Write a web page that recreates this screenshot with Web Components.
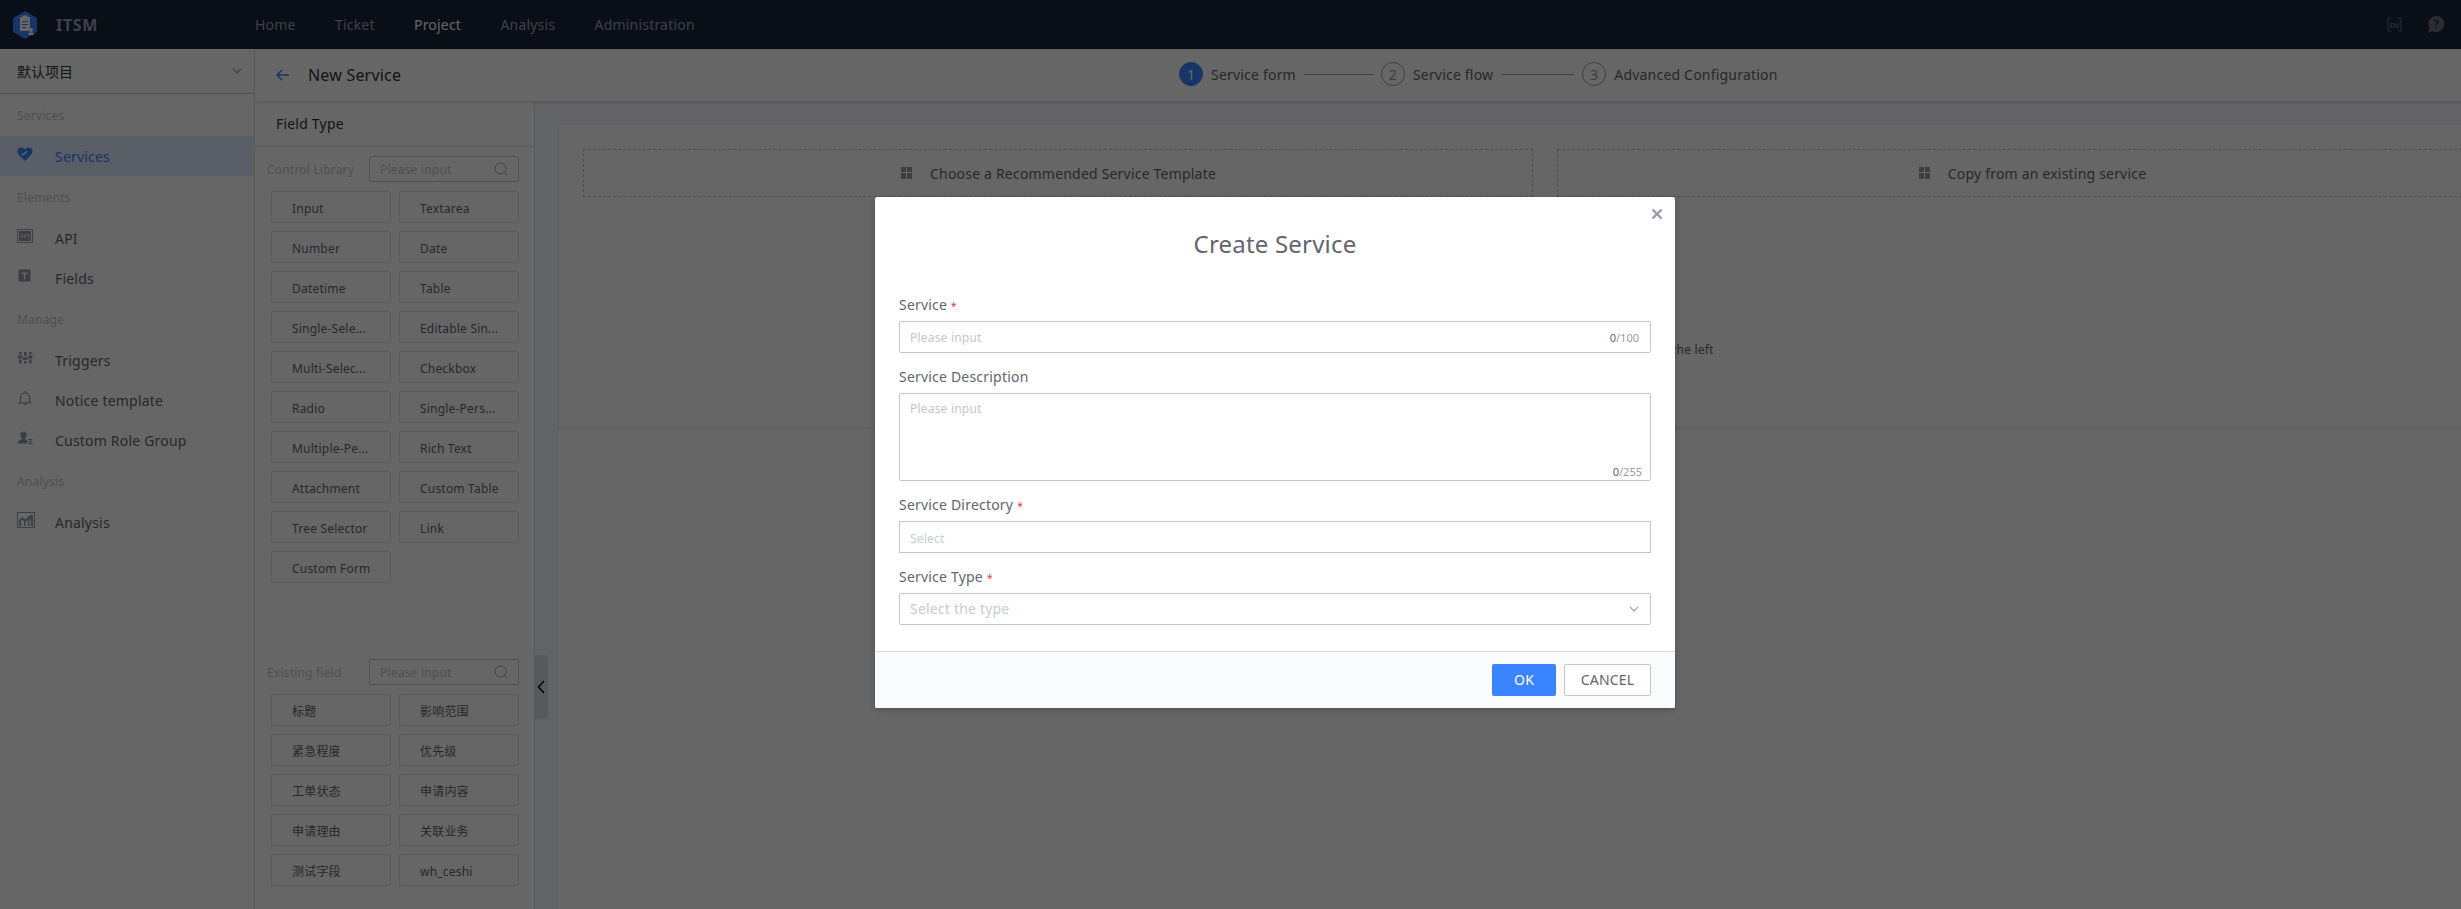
<!DOCTYPE html>
<html lang="en">
<head>
<meta charset="utf-8">
<title>ITSM</title>
<style>
    html, body { margin: 0; height: 100%; overflow: hidden; }
    body { font-family: "Noto Sans", "Noto Sans CJK SC", sans-serif; font-size: 14px; letter-spacing: .2px; color: #63656e; }
</style>
</head>
<body>
<itsm-app>
    <itsm-topbar slot="top"></itsm-topbar>
    <itsm-sidebar slot="side">
        <side-label>Services</side-label>
        <side-item icon="heart" active>Services</side-item>
        <side-label>Elements</side-label>
        <side-item icon="api">API</side-item>
        <side-item icon="field">Fields</side-item>
        <side-label>Manage</side-label>
        <side-item icon="sliders">Triggers</side-item>
        <side-item icon="bell">Notice template</side-item>
        <side-item icon="role">Custom Role Group</side-item>
        <side-label>Analysis</side-label>
        <side-item icon="chart">Analysis</side-item>
    </itsm-sidebar>
    <itsm-subheader slot="sub"></itsm-subheader>
    <field-panel slot="panel">
        <field-group label="Control Library" class="first">
            <field-btn>Input</field-btn><field-btn>Textarea</field-btn>
            <field-btn>Number</field-btn><field-btn>Date</field-btn>
            <field-btn>Datetime</field-btn><field-btn>Table</field-btn>
            <field-btn>Single-Sele...</field-btn><field-btn>Editable Sin...</field-btn>
            <field-btn>Multi-Selec...</field-btn><field-btn>Checkbox</field-btn>
            <field-btn>Radio</field-btn><field-btn>Single-Pers...</field-btn>
            <field-btn>Multiple-Pe...</field-btn><field-btn>Rich Text</field-btn>
            <field-btn>Attachment</field-btn><field-btn>Custom Table</field-btn>
            <field-btn>Tree Selector</field-btn><field-btn>Link</field-btn>
            <field-btn>Custom Form</field-btn>
        </field-group>
        <field-group label="Existing field" class="second">
            <field-btn>标题</field-btn><field-btn>影响范围</field-btn>
            <field-btn>紧急程度</field-btn><field-btn>优先级</field-btn>
            <field-btn>工单状态</field-btn><field-btn>申请内容</field-btn>
            <field-btn>申请理由</field-btn><field-btn>关联业务</field-btn>
            <field-btn>测试字段</field-btn><field-btn>wh_ceshi</field-btn>
        </field-group>
    </field-panel>
    <service-canvas slot="canvas"></service-canvas>
    <create-dialog slot="overlay"></create-dialog>
</itsm-app>

<script>
const icons = {
    heart: `<svg width="16" height="16" viewBox="0 0 16 16"><path fill="#3a84ff" d="M8 15 1.600 8.400C-.2 6.400.2 3.200 2.300 2c1.900-1 3.900-.5 5.700 1.200C9.800 1.500 11.800 1 13.700 2c2.100 1.200 2.500 4.400.7 6.400z"/><path fill="none" stroke="#fff" stroke-width="1.200" d="M4.500 7.500 6.300 9 10 5"/></svg>`,
    api: `<svg width="16" height="16" viewBox="0 0 16 16"><rect x=".5" y="1.500" width="15" height="13" fill="none" stroke="#979ba5"/><rect x="2" y="3" width="12" height="10" fill="#979ba5"/><text x="8" y="10.300" font-size="6" font-family="Noto Sans" text-anchor="middle" fill="#fff">API</text></svg>`,
    field: `<svg width="16" height="16" viewBox="0 0 16 16"><rect x="1.500" y="1.500" width="12" height="12" fill="#979ba5"/><path fill="#fff" d="M4.500 4.500h6v1.400H8.300V11H6.700V5.900H4.500z"/></svg>`,
    sliders: `<svg width="16" height="16" viewBox="0 0 16 16" fill="#979ba5"><rect x="2" y="2" width="2.500" height="2.500"/><rect x="7" y="2" width="2.500" height="4"/><rect x="12" y="2" width="2.500" height="2.500"/><rect x="1" y="5.500" width="4.500" height="3"/><rect x="6" y="7" width="4.500" height="3"/><rect x="11" y="5.500" width="4.500" height="3"/><rect x="2" y="9.500" width="2.500" height="4"/><rect x="7" y="11" width="2.500" height="2.500"/><rect x="12" y="9.500" width="2.500" height="4"/></svg>`,
    bell: `<svg width="16" height="16" viewBox="0 0 16 16" fill="none" stroke="#979ba5" stroke-width="1.200"><path d="M3.500 12V7.500c0-2.700 2-4.500 4.500-4.500s4.500 1.800 4.500 4.500V12l1 .8H2.500zM8 1v2M6.500 14.500h3"/></svg>`,
    role: `<svg width="16" height="16" viewBox="0 0 16 16" fill="#979ba5"><path d="M6.500 1.500c2 0 3.200 1.400 3.200 3.300 0 1.500-.7 2.700-1.500 3.300v1.100c.5.300 1.100.5 1.800.8v3.500H1v-1.800c0-1 1.800-1.800 3.800-2.500V8.100C4 7.500 3.300 6.300 3.300 4.800c0-1.900 1.200-3.300 3.200-3.300z"/><rect x="11" y="9" width="4.500" height="1.100"/><rect x="11" y="11" width="4.500" height="1.100"/><rect x="11" y="13" width="4.500" height="1.100"/></svg>`,
    chart: `<svg width="18" height="16" viewBox="0 0 18 16"><rect x=".5" y=".5" width="17" height="15" fill="none" stroke="#979ba5"/><path fill="#979ba5" d="M2 14V8l3.500-3 3 2.500L14 2.500l2 1V14h-2V6.500l-1.500 1V14h-1.500V8.500l-2.500 1V14H7V9L5.500 7.500 4 9v5z"/></svg>`,
    grid: `<svg width="13" height="16" viewBox="0 0 13 16" fill="#979ba5"><rect x="1" y="2" width="5" height="5"/><rect x="7" y="2" width="5" height="5"/><rect x="1" y="8" width="5" height="6"/><rect x="7" y="8" width="5" height="6"/></svg>`,
    search: `<svg width="14" height="14" viewBox="0 0 14 14" fill="none" stroke="#979ba5" stroke-width="1"><circle cx="6.500" cy="6.500" r="5.500"/><path d="m10.500 10.500 2.500 2.500"/></svg>`,
    chevron: `<svg width="10" height="6" viewBox="0 0 10 6" fill="none" stroke="#979ba5" stroke-width="1.200"><path d="m1 .8 4 4 4-4"/></svg>`,
}

class ItsmApp extends HTMLElement {
    constructor() {
        super()
        this.attachShadow({ mode: 'open' })
        this.shadowRoot.innerHTML = `
            <style>
                :host { display: flex; flex-direction: column; width: 2461px; height: 909px; overflow: hidden; position: relative; background: #fff; }
                .body { flex: 1; display: flex; min-height: 0; }
                .work { flex: 1; display: flex; flex-direction: column; min-width: 0; }
                .row { flex: 1; display: flex; min-height: 0; }
                .mask { position: absolute; inset: 0; z-index: 5; background: rgba(0, 0, 0, .6); }
            </style>
            <slot name="top"></slot>
            <div class="body">
                <slot name="side"></slot>
                <div class="work">
                    <slot name="sub"></slot>
                    <div class="row">
                        <slot name="panel"></slot>
                        <slot name="canvas"></slot>
                    </div>
                </div>
            </div>
            <div class="mask"></div>
            <slot name="overlay"></slot>
        `
    }
}

class ItsmTopbar extends HTMLElement {
    constructor() {
        super()
        this.attachShadow({ mode: 'open' })
        this.shadowRoot.innerHTML = `
            <style>
                :host { display: flex; align-items: center; height: 49px; flex: none; background: #19233a; color: #96a2b9; }
                .logo { display: flex; align-items: center; width: 255px; padding-left: 12px; box-sizing: border-box; }
                .logo b { font-size: 16px; font-weight: 700; letter-spacing: .7px; margin-left: 18px; }
                nav { display: flex; gap: 39.3px; font-size: 14px; }
                .on { color: #fff; }
                .tools { margin-left: auto; display: flex; align-items: center; gap: 26px; padding-right: 16px; }
            </style>
            <div class="logo">
                <svg width="26" height="28" viewBox="0 0 26 28">
                    <path fill="#3a84ff" d="M13 0 25 7v14l-12 7L1 21V7z"/>
                    <path fill="#fff" d="M8 6h2.500V4.500h5V6H18v14H8z"/>
                    <path fill="#3a84ff" d="M10 10h6v1h-6zM10 13h6v1h-6zM10 16h4v1h-4z"/>
                    <circle cx="19" cy="19" r="2" fill="#fff"/><path fill="#fff" d="M16 24c0-2 1.500-2.500 3-2.500s3 .5 3 2.500z"/>
                </svg>
                <b>ITSM</b>
            </div>
            <nav><span>Home</span><span>Ticket</span><span class="on">Project</span><span>Analysis</span><span>Administration</span></nav>
            <div class="tools">
                <svg width="15" height="15" viewBox="0 0 15 15" fill="none" stroke="#6b7280"><path d="M4 1H1v13h3M11 1h3v13h-3"/><text x="7.500" y="10.500" font-size="7" font-weight="700" font-family="Noto Sans" text-anchor="middle" fill="#6b7280" stroke="none">EN</text></svg>
                <svg width="17" height="17" viewBox="0 0 17 17"><path fill="#6b7280" d="M8.500 0a8 8 0 1 1-4 15L0 17l1.500-5A8 8 0 0 1 8.500 0z"/><text x="8.500" y="12" font-size="10" font-weight="700" font-family="Noto Sans" text-anchor="middle" fill="#19233a">?</text></svg>
            </div>
        `
    }
}

class ItsmSidebar extends HTMLElement {
    constructor() {
        super()
        this.attachShadow({ mode: 'open' })
        this.shadowRoot.innerHTML = `
            <style>
                :host { display: block; width: 255px; flex: none; box-sizing: border-box; border-right: 1px solid #dcdee5; background: #fff; }
                .project { display: flex; align-items: center; justify-content: space-between; box-sizing: border-box; height: 45px; padding: 0 12px 0 17px; border-bottom: 1px solid #c4c6cc; color: #313238; font-size: 14px; letter-spacing: 0; }
            </style>
            <div class="project"><span>默认项目</span>${icons.chevron}</div>
            <slot></slot>
        `
    }
}

class SideLabel extends HTMLElement {
    constructor() {
        super()
        this.attachShadow({ mode: 'open' })
        this.shadowRoot.innerHTML = `
            <style>
                :host { display: flex; align-items: center; height: 42px; padding-left: 17px; font-size: 12px; color: #c4c6cc; }
            </style>
            <slot></slot>
        `
    }
}

class SideItem extends HTMLElement {
    constructor() {
        super()
        this.attachShadow({ mode: 'open' })
        this.shadowRoot.innerHTML = `
            <style>
                :host { display: flex; align-items: center; height: 40px; padding-left: 17px; font-size: 14px; color: #63656e; }
                :host([active]) { background: #e1ecff; color: #3a84ff; }
                .icon { width: 38px; display: flex; flex: none; margin-top: -4px; }
            </style>
            <span class="icon">${icons[this.getAttribute('icon')] || ''}</span>
            <slot></slot>
        `
    }
}

class ItsmSubheader extends HTMLElement {
    constructor() {
        super()
        this.attachShadow({ mode: 'open' })
        this.shadowRoot.innerHTML = `
            <style>
                :host { display: flex; align-items: center; flex: none; height: 52px; box-sizing: border-box; background: #fff; box-shadow: 0 2px 3px rgba(0, 0, 0, .12); position: relative; z-index: 1; }
                .title { display: flex; align-items: center; width: 924px; flex: none; padding-left: 21px; box-sizing: border-box; font-size: 16px; color: #313238; }
                .title svg { margin-right: 19px; }
                .steps { display: flex; align-items: center; gap: 8px; margin-top: -2px; }
                .line { width: 69px; height: 1px; background: #979ba5; }
                .line.long { width: 73px; }
            </style>
            <div class="title">
                <svg width="13" height="12" viewBox="0 0 13 12" fill="none" stroke="#3a84ff" stroke-width="1.500"><path d="M13 6H1.500M6 1 1 6l5 5"/></svg>
                <span>New Service</span>
            </div>
            <div class="steps">
                <step-item num="1" active>Service form</step-item><i class="line"></i>
                <step-item num="2">Service flow</step-item><i class="line long"></i>
                <step-item num="3">Advanced Configuration</step-item>
            </div>
        `
    }
}

class StepItem extends HTMLElement {
    constructor() {
        super()
        this.attachShadow({ mode: 'open' })
        this.shadowRoot.innerHTML = `
            <style>
                :host { display: flex; align-items: center; gap: 8px; font-size: 14px; color: #63656e; }
                .num { width: 24px; height: 24px; box-sizing: border-box; border: 1px solid #979ba5; border-radius: 50%; display: flex; align-items: center; justify-content: center; color: #979ba5; }
                :host([active]) .num { background: #3a84ff; border-color: #3a84ff; color: #fff; }
            </style>
            <span class="num">${this.getAttribute('num')}</span>
            <slot></slot>
        `
    }
}

class FieldPanel extends HTMLElement {
    constructor() {
        super()
        this.attachShadow({ mode: 'open' })
        this.shadowRoot.innerHTML = `
            <style>
                :host { display: block; width: 280px; flex: none; box-sizing: border-box; border-right: 1px solid #dcdee5; background: #fff; position: relative; }
                .head { height: 46px; box-sizing: border-box; border-bottom: 1px solid #dcdee5; padding-left: 21px; display: flex; align-items: center; font-size: 14px; color: #313238; }
                .handle { position: absolute; left: 279px; top: 554px; width: 14px; height: 64px; border-radius: 0 4px 4px 0; background: #dcdee5; display: flex; align-items: center; justify-content: center; }
            </style>
            <div class="head">Field Type</div>
            <slot></slot>
            <div class="handle"><svg width="8" height="14" viewBox="0 0 8 14" fill="none" stroke="#000" stroke-width="1.500"><path d="M7 1 1.500 7 7 13"/></svg></div>
        `
    }
}

class FieldGroup extends HTMLElement {
    constructor() {
        super()
        this.attachShadow({ mode: 'open' })
        this.shadowRoot.innerHTML = `
            <style>
                :host { display: block; padding: 0 15px 0 12px; margin-top: 9px; }
                :host(.second) { margin-top: 76px; }
                .search { display: flex; align-items: center; justify-content: space-between; height: 26px; margin-bottom: 9px; font-size: 12px; color: #c4c6cc; }
                .box { display: flex; align-items: center; justify-content: space-between; width: 150px; height: 26px; box-sizing: border-box; border: 1px solid #c4c6cc; border-radius: 2px; padding: 0 10px; }
                .grid { display: grid; grid-template-columns: 120px 120px; gap: 8px; margin-left: 4px; }
            </style>
            <div class="search">
                <span>${this.getAttribute('label')}</span>
                <div class="box"><span>Please input</span>${icons.search}</div>
            </div>
            <div class="grid"><slot></slot></div>
        `
    }
}

class FieldBtn extends HTMLElement {
    constructor() {
        super()
        this.attachShadow({ mode: 'open' })
        this.shadowRoot.innerHTML = `
            <style>
                :host { display: flex; align-items: center; height: 32px; box-sizing: border-box; border: 1px solid #dcdee5; border-radius: 2px; padding-left: 20px; padding-top: 2px; font-size: 12px; color: #63656e; white-space: nowrap; background: #fff; }
            </style>
            <slot></slot>
        `
    }
}

class ServiceCanvas extends HTMLElement {
    constructor() {
        super()
        this.attachShadow({ mode: 'open' })
        this.shadowRoot.innerHTML = `
            <style>
                :host { display: block; flex: 1; min-width: 0; overflow: hidden; background: #f5f7fa; padding: 24px 0 0 24px; }
                .sheet { width: 1972px; height: 100%; background: #fff; }
                .card { height: 302px; box-sizing: border-box; padding: 24px; box-shadow: 0 2px 3px rgba(0, 0, 0, .1); }
                .boxes { display: grid; grid-template-columns: 950px 950px; gap: 24px; }
                .hint { text-align: center; font-size: 12px; color: #63656e; margin-top: 144px; }
            </style>
            <div class="sheet">
                <div class="card">
                    <div class="boxes">
                        <template-box>Choose a Recommended Service Template</template-box>
                        <template-box>Copy from an existing service</template-box>
                    </div>
                    <div class="hint">Choose a template above, or add any control from the left</div>
                </div>
            </div>
        `
    }
}

class TemplateBox extends HTMLElement {
    constructor() {
        super()
        this.attachShadow({ mode: 'open' })
        this.shadowRoot.innerHTML = `
            <style>
                :host { display: flex; align-items: center; justify-content: center; gap: 17px; height: 48px; box-sizing: border-box; border: 1px dashed #c4c6cc; font-size: 14px; color: #63656e; }
            </style>
            ${icons.grid}
            <span><slot></slot></span>
        `
    }
}

class CreateDialog extends HTMLElement {
    constructor() {
        super()
        this.attachShadow({ mode: 'open' })
        this.shadowRoot.innerHTML = `
            <style>
                :host { position: absolute; z-index: 6; left: 875px; top: 197px; width: 800px; background: #fff; border-radius: 2px; box-shadow: 0 2px 6px rgba(0, 0, 0, .2); display: block; }
                header { height: 98px; box-sizing: border-box; text-align: center; font-size: 24px; line-height: 94px; color: #63656e; }
                .close { position: absolute; right: 12px; top: 11px; }
                .form { padding: 0 24px 26px; display: flex; flex-direction: column; gap: 14px; }
                footer { display: flex; justify-content: flex-end; align-items: center; gap: 8px; height: 57px; box-sizing: border-box; padding: 0 24px; background: #fafbfd; border-top: 1px solid #dcdee5; border-radius: 0 0 2px 2px; }
                .btn { height: 32px; box-sizing: border-box; border-radius: 2px; padding-bottom: 2px; display: flex; align-items: center; justify-content: center; font-size: 14px; }
                .ok { width: 64px; background: #3a84ff; color: #fff; }
                .cancel { width: 87px; background: #fff; border: 1px solid #c4c6cc; color: #63656e; }
            </style>
            <svg class="close" width="12" height="12" viewBox="0 0 12 12" fill="none" stroke="#979ba5" stroke-width="2.400"><path d="m1.500 1.500 9 9M10.500 1.500l-9 9"/></svg>
            <header>Create Service</header>
            <div class="form">
                <dialog-field label="Service" required placeholder="Please input" count="100"></dialog-field>
                <dialog-field label="Service Description" multiline placeholder="Please input" count="255"></dialog-field>
                <dialog-field label="Service Directory" required placeholder="Select" kind="tree"></dialog-field>
                <dialog-field label="Service Type" required placeholder="Select the type" kind="select"></dialog-field>
            </div>
            <footer>
                <div class="btn ok">OK</div>
                <div class="btn cancel">CANCEL</div>
            </footer>
        `
    }
}

class DialogField extends HTMLElement {
    constructor() {
        super()
        this.attachShadow({ mode: 'open' })
        const kind = this.getAttribute('kind') || ''
        const multiline = this.hasAttribute('multiline')
        const count = this.getAttribute('count')
        this.shadowRoot.innerHTML = `
            <style>
                :host { display: block; }
                .label { height: 20px; line-height: 20px; margin-bottom: 6px; font-size: 14px; color: #63656e; }
                .req { color: #ea3636; font-size: 10px; margin-left: 4px; }
                .control { position: relative; display: flex; align-items: center; justify-content: space-between; height: 32px; box-sizing: border-box; border: 1px solid #c4c6cc; border-radius: 2px; padding: 0 11px 0 10px; font-size: 12px; color: #c4c6cc; }
                .control.multi { height: 88px; align-items: flex-start; padding-top: 5px; line-height: 20px; }
                .control.tree, .control.select { color: #c3cdd7; }
                .control.tree { padding-top: 2px; border-radius: 0; }
                .control.select { font-size: 14px; padding-bottom: 2px; }
                .control.select svg { margin-top: 2px; }
                .count { font-size: 11px; color: #979ba5; letter-spacing: 0; }
                .count b { font-weight: 400; color: #63656e; }
                .multi .count { position: absolute; right: 8px; bottom: 0; line-height: 16px; }
            </style>
            <div class="label">${this.getAttribute('label')}${this.hasAttribute('required') ? '<span class="req">*</span>' : ''}</div>
            <div class="control ${multiline ? 'multi' : ''} ${kind}">
                <span>${this.getAttribute('placeholder')}</span>
                ${count ? `<span class="count"><b>0</b>/${count}</span>` : ''}
                ${kind === 'select' ? icons.chevron : ''}
            </div>
        `
    }
}

customElements.define('itsm-app', ItsmApp)
customElements.define('itsm-topbar', ItsmTopbar)
customElements.define('itsm-sidebar', ItsmSidebar)
customElements.define('side-label', SideLabel)
customElements.define('side-item', SideItem)
customElements.define('itsm-subheader', ItsmSubheader)
customElements.define('step-item', StepItem)
customElements.define('field-panel', FieldPanel)
customElements.define('field-group', FieldGroup)
customElements.define('field-btn', FieldBtn)
customElements.define('service-canvas', ServiceCanvas)
customElements.define('template-box', TemplateBox)
customElements.define('create-dialog', CreateDialog)
customElements.define('dialog-field', DialogField)
</script>
</body>
</html>
